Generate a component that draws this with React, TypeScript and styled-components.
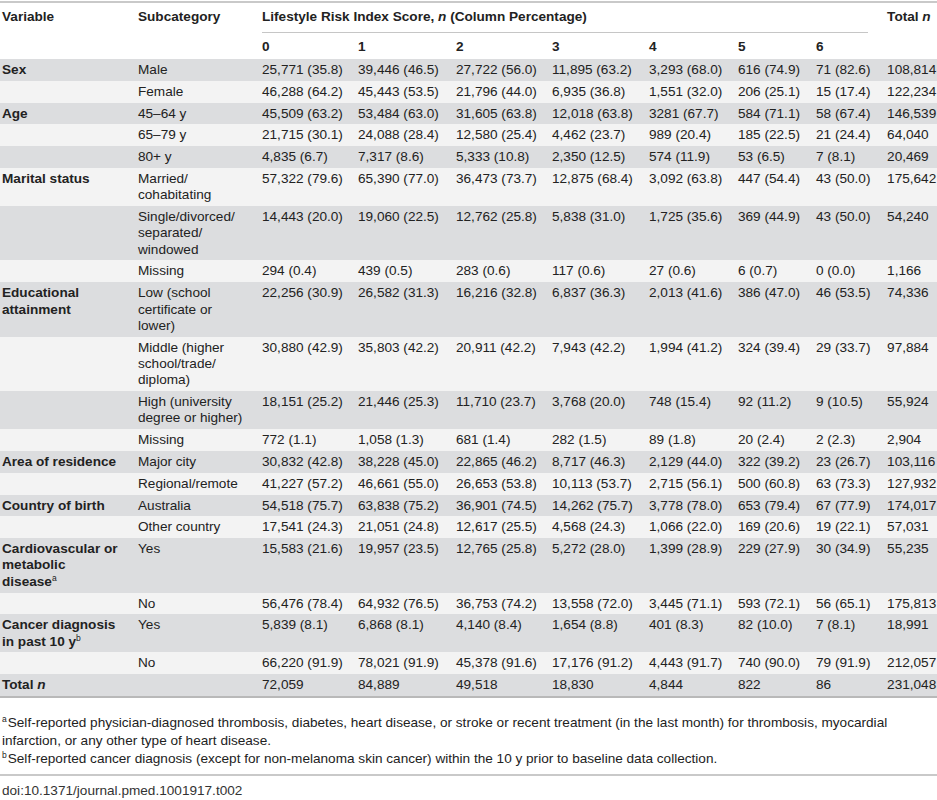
import styled, { createGlobalStyle } from "styled-components";

const GlobalStyle = createGlobalStyle`
  body {
    margin: 0;
    background: #ffffff;
    font-family: "Liberation Sans", Arial, sans-serif;
    color: #222222;
  }
`;

const Page = styled.div`
  width: 937px;
  padding-top: 1px;
  font-size: 13.6px;
`;

const Table = styled.table`
  width: 937px;
  table-layout: fixed;
  border-collapse: collapse;
  border-spacing: 0;
  border-top: 2px solid #c9c9c9;
  border-bottom: 2px solid #b9b9b9;
`;

const HeadCell = styled.th<{ $second?: boolean }>`
  text-align: left;
  vertical-align: top;
  font-weight: bold;
  line-height: 16.5px;
  padding: ${(p) => (p.$second ? "6.5px 2px 3.5px" : "6px 2px 6px")};
  background: #ffffff;
  white-space: nowrap;
`;

const SpanCell = styled(HeadCell)`
  padding-bottom: 0;
`;

const SpanLabel = styled.div`
  padding-bottom: 6px;
  margin-right: 15px;
  border-bottom: 1px solid #c6c6c6;
`;

const Row = styled.tr<{ $dark: boolean }>`
  background: ${(p) => (p.$dark ? "#dcdddf" : "#f3f3f3")};
`;

// line breaks in labels follow the reference, so wrapping is explicit
const Cell = styled.td<{ $bold?: boolean }>`
  vertical-align: top;
  line-height: 16.3px;
  padding: 3px 2px 2.5px;
  font-weight: ${(p) => (p.$bold ? "bold" : "normal")};
  white-space: pre;
`;

const Sup = styled.sup`
  font-size: 8.5px;
  line-height: 0;
  font-weight: normal;
  vertical-align: 5px;
  margin-right: 1px;
`;

const Notes = styled.div`
  margin-top: 16px;
  padding: 0 2px 6px;
  line-height: 18px;
  border-bottom: 2px solid #c9c9c9;
`;

const Note = styled.p`
  margin: 0;
`;

const Doi = styled.div`
  padding: 6px 2px 0;
  line-height: 18px;
  color: #333333;
`;

type DataRow = {
  variable?: React.ReactNode;
  sub: string;
  values: string[];
  total: string;
};

const widths = [136, 124, 96, 98, 96, 97, 89, 78, 71, 52];

const rows: DataRow[] = [
  { variable: "Sex", sub: "Male", values: ["25,771 (35.8)", "39,446 (46.5)", "27,722 (56.0)", "11,895 (63.2)", "3,293 (68.0)", "616 (74.9)", "71 (82.6)"], total: "108,814" },
  { sub: "Female", values: ["46,288 (64.2)", "45,443 (53.5)", "21,796 (44.0)", "6,935 (36.8)", "1,551 (32.0)", "206 (25.1)", "15 (17.4)"], total: "122,234" },
  { variable: "Age", sub: "45–64 y", values: ["45,509 (63.2)", "53,484 (63.0)", "31,605 (63.8)", "12,018 (63.8)", "3281 (67.7)", "584 (71.1)", "58 (67.4)"], total: "146,539" },
  { sub: "65–79 y", values: ["21,715 (30.1)", "24,088 (28.4)", "12,580 (25.4)", "4,462 (23.7)", "989 (20.4)", "185 (22.5)", "21 (24.4)"], total: "64,040" },
  { sub: "80+ y", values: ["4,835 (6.7)", "7,317 (8.6)", "5,333 (10.8)", "2,350 (12.5)", "574 (11.9)", "53 (6.5)", "7 (8.1)"], total: "20,469" },
  { variable: "Marital status", sub: "Married/\ncohabitating", values: ["57,322 (79.6)", "65,390 (77.0)", "36,473 (73.7)", "12,875 (68.4)", "3,092 (63.8)", "447 (54.4)", "43 (50.0)"], total: "175,642" },
  { sub: "Single/divorced/\nseparated/\nwindowed", values: ["14,443 (20.0)", "19,060 (22.5)", "12,762 (25.8)", "5,838 (31.0)", "1,725 (35.6)", "369 (44.9)", "43 (50.0)"], total: "54,240" },
  { sub: "Missing", values: ["294 (0.4)", "439 (0.5)", "283 (0.6)", "117 (0.6)", "27 (0.6)", "6 (0.7)", "0 (0.0)"], total: "1,166" },
  { variable: "Educational\nattainment", sub: "Low (school\ncertificate or\nlower)", values: ["22,256 (30.9)", "26,582 (31.3)", "16,216 (32.8)", "6,837 (36.3)", "2,013 (41.6)", "386 (47.0)", "46 (53.5)"], total: "74,336" },
  { sub: "Middle (higher\nschool/trade/\ndiploma)", values: ["30,880 (42.9)", "35,803 (42.2)", "20,911 (42.2)", "7,943 (42.2)", "1,994 (41.2)", "324 (39.4)", "29 (33.7)"], total: "97,884" },
  { sub: "High (university\ndegree or higher)", values: ["18,151 (25.2)", "21,446 (25.3)", "11,710 (23.7)", "3,768 (20.0)", "748 (15.4)", "92 (11.2)", "9 (10.5)"], total: "55,924" },
  { sub: "Missing", values: ["772 (1.1)", "1,058 (1.3)", "681 (1.4)", "282 (1.5)", "89 (1.8)", "20 (2.4)", "2 (2.3)"], total: "2,904" },
  { variable: "Area of residence", sub: "Major city", values: ["30,832 (42.8)", "38,228 (45.0)", "22,865 (46.2)", "8,717 (46.3)", "2,129 (44.0)", "322 (39.2)", "23 (26.7)"], total: "103,116" },
  { sub: "Regional/remote", values: ["41,227 (57.2)", "46,661 (55.0)", "26,653 (53.8)", "10,113 (53.7)", "2,715 (56.1)", "500 (60.8)", "63 (73.3)"], total: "127,932" },
  { variable: "Country of birth", sub: "Australia", values: ["54,518 (75.7)", "63,838 (75.2)", "36,901 (74.5)", "14,262 (75.7)", "3,778 (78.0)", "653 (79.4)", "67 (77.9)"], total: "174,017" },
  { sub: "Other country", values: ["17,541 (24.3)", "21,051 (24.8)", "12,617 (25.5)", "4,568 (24.3)", "1,066 (22.0)", "169 (20.6)", "19 (22.1)"], total: "57,031" },
  { variable: <>{"Cardiovascular or\nmetabolic\ndisease"}<Sup>a</Sup></>, sub: "Yes", values: ["15,583 (21.6)", "19,957 (23.5)", "12,765 (25.8)", "5,272 (28.0)", "1,399 (28.9)", "229 (27.9)", "30 (34.9)"], total: "55,235" },
  { sub: "No", values: ["56,476 (78.4)", "64,932 (76.5)", "36,753 (74.2)", "13,558 (72.0)", "3,445 (71.1)", "593 (72.1)", "56 (65.1)"], total: "175,813" },
  { variable: <>{"Cancer diagnosis\nin past 10 y"}<Sup>b</Sup></>, sub: "Yes", values: ["5,839 (8.1)", "6,868 (8.1)", "4,140 (8.4)", "1,654 (8.8)", "401 (8.3)", "82 (10.0)", "7 (8.1)"], total: "18,991" },
  { sub: "No", values: ["66,220 (91.9)", "78,021 (91.9)", "45,378 (91.6)", "17,176 (91.2)", "4,443 (91.7)", "740 (90.0)", "79 (91.9)"], total: "212,057" },
  { variable: <>Total <i>n</i></>, sub: "", values: ["72,059", "84,889", "49,518", "18,830", "4,844", "822", "86"], total: "231,048" },
];

export default function App() {
  return (
    <Page>
      <GlobalStyle />
      <Table>
        <colgroup>
          {widths.map((w, i) => (
            <col key={i} style={{ width: w }} />
          ))}
        </colgroup>
        <thead>
          <tr>
            <HeadCell rowSpan={2}>Variable</HeadCell>
            <HeadCell rowSpan={2}>Subcategory</HeadCell>
            <SpanCell colSpan={7}>
              <SpanLabel>
                Lifestyle Risk Index Score, <i>n</i> (Column Percentage)
              </SpanLabel>
            </SpanCell>
            <HeadCell rowSpan={2}>
              Total <i>n</i>
            </HeadCell>
          </tr>
          <tr>
            {["0", "1", "2", "3", "4", "5", "6"].map((s) => (
              <HeadCell key={s} $second>
                {s}
              </HeadCell>
            ))}
          </tr>
        </thead>
        <tbody>
          {rows.map((r, i) => (
            <Row key={i} $dark={i % 2 === 0}>
              <Cell $bold>{r.variable}</Cell>
              <Cell>{r.sub}</Cell>
              {r.values.map((v, j) => (
                <Cell key={j}>{v}</Cell>
              ))}
              <Cell>{r.total}</Cell>
            </Row>
          ))}
        </tbody>
      </Table>
      <Notes>
        <Note>
          <Sup>a</Sup>Self-reported physician-diagnosed thrombosis, diabetes, heart disease, or stroke or recent
          treatment (in the last month) for thrombosis, myocardial infarction, or any other type of heart disease.
        </Note>
        <Note>
          <Sup>b</Sup>Self-reported cancer diagnosis (except for non-melanoma skin cancer) within the 10 y prior to
          baseline data collection.
        </Note>
      </Notes>
      <Doi>doi:10.1371/journal.pmed.1001917.t002</Doi>
    </Page>
  );
}
